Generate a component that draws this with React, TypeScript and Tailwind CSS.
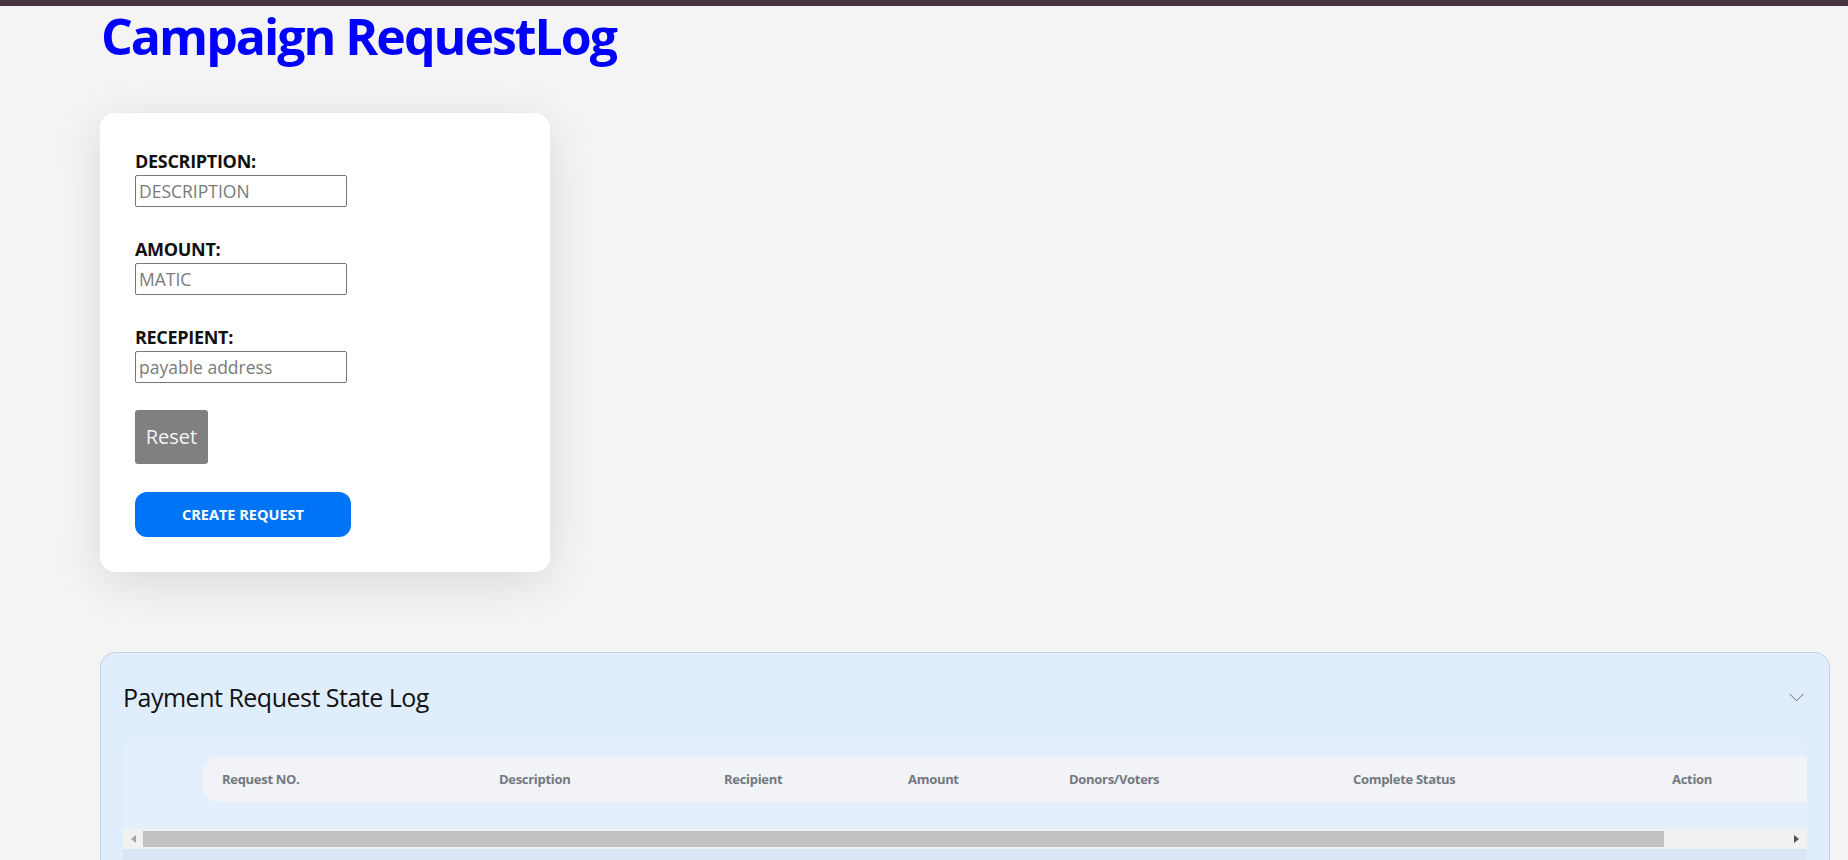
import React from 'react';

const columns = [
  { label: 'Request NO.', width: 'w-[277px]' },
  { label: 'Description', width: 'w-[225px]' },
  { label: 'Recipient', width: 'w-[184px]' },
  { label: 'Amount', width: 'w-[161px]' },
  { label: 'Donors/Voters', width: 'w-[284px]' },
  { label: 'Complete Status', width: 'w-[319px]' },
  { label: 'Action', width: 'flex-1' },
];

const fields = [
  { label: 'DESCRIPTION:', placeholder: 'DESCRIPTION' },
  { label: 'AMOUNT:', placeholder: 'MATIC' },
  { label: 'RECEPIENT:', placeholder: 'payable address' },
];

const App: React.FC = () => {
  return (
    <div className="min-h-screen bg-[#f4f4f4] font-['Open_Sans',sans-serif]">
      <div className="h-[6px] bg-[#48333f]" />

      <div className="pl-[100px] pr-[18px]">
        <h1 className="mt-[5px] pl-[1px] text-[50px] leading-[50px] font-bold tracking-[-0.04em] text-[#0000ff]">
          Campaign RequestLog
        </h1>

        <div className="mt-[52px] w-[450px] rounded-[15px] bg-white px-[35px] pt-[36px] pb-[35px] shadow-[0_10px_50px_rgba(0,0,0,0.11)]">
          {fields.map((field, index) => (
            <div key={field.label} className={index > 0 ? 'mt-[30px]' : ''}>
              <label className="block text-[18px] leading-[24px] font-bold tracking-[-0.3px] text-[#111]">
                {field.label}
              </label>
              <input
                type="text"
                placeholder={field.placeholder}
                className="mt-[2px] block h-[32px] w-[212px] rounded-[2px] border border-[#767676] bg-white px-[3px] text-[17.5px] text-black placeholder:text-[#7a7a7a] focus:outline-none"
              />
            </div>
          ))}

          <button className="mt-[27px] block h-[54px] w-[73px] rounded-[3px] bg-[#808080] text-[20px] text-[#f4f4f4]">
            Reset
          </button>

          <button className="mt-[28px] block h-[45px] w-[216px] rounded-[12px] bg-[#0074f6] text-[14.5px] font-bold text-white">
            CREATE REQUEST
          </button>
        </div>

        <div className="mt-[80px] h-[260px] rounded-[15px] border border-[#c3d1e1] bg-[#e0edfd] px-[22px] pt-[28px]">
          <div className="flex h-[32px] items-center justify-between">
            <h2 className="text-[25px] leading-[32px] tracking-[-0.5px] text-[#111]">Payment Request State Log</h2>
            <svg width="15" height="9" viewBox="0 0 15 9" className="mr-[3px]">
              <path d="M0.5 0.8 L7.5 7.8 L14.5 0.8" fill="none" stroke="#6b6b6b" strokeWidth="1" />
            </svg>
          </div>

          <div className="mt-[25px] rounded-t-[15px] bg-[#e3effd] pt-[19px]">
            <div className="ml-[80px] flex h-[45px] items-center rounded-l-[15px] bg-[#f1f3f6]">
              {columns.map((col) => (
                <div key={col.label} className={`${col.width} pl-[19px] text-[13px] font-bold tracking-[-0.3px] text-[#73797f]`}>
                  {col.label}
                </div>
              ))}
            </div>

            <div className="mt-[27px] flex h-[20px] items-center bg-[#f1f1f1]">
              <div className="flex w-[20px] justify-center">
                <svg width="5" height="8" viewBox="0 0 5 8">
                  <path d="M5 0 L0 4 L5 8 Z" fill="#a3a3a3" />
                </svg>
              </div>
              <div className="h-[16px] w-[1521px] bg-[#c1c1c1]" />
              <div className="flex flex-1 justify-end pr-[8px]">
                <svg width="5" height="8" viewBox="0 0 5 8">
                  <path d="M0 0 L5 4 L0 8 Z" fill="#505050" />
                </svg>
              </div>
            </div>
            <div className="h-[40px] bg-[#dae6f6]" />
          </div>
        </div>
      </div>
    </div>
  );
};

export default App;
